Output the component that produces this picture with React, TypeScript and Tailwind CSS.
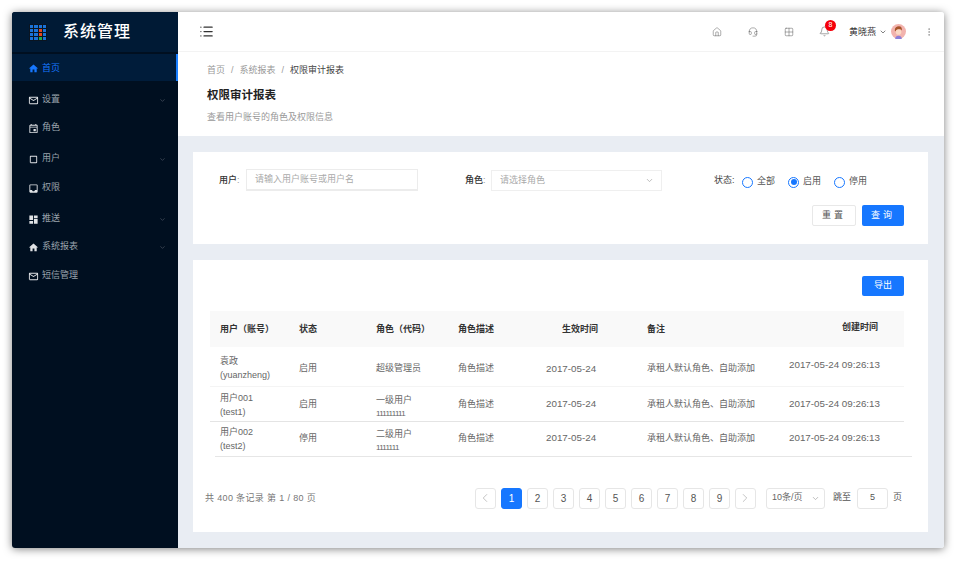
import { Bell, ChevronDown, ChevronLeft, ChevronRight, EllipsisVertical, Grid2x2, Headset, Home, List } from "lucide-react";
import { MdCropSquare, MdDashboard, MdHome, MdInbox, MdMailOutline, MdOutlineEvent } from "react-icons/md";

const menu = [
  { label: "设置", icon: MdMailOutline, arrow: true, top: "mt-[4px]" },
  { label: "角色", icon: MdOutlineEvent, arrow: false, top: "" },
  { label: "用户", icon: MdCropSquare, arrow: true, top: "mt-[3px]" },
  { label: "权限", icon: MdInbox, arrow: false, top: "mt-px" },
  { label: "推送", icon: MdDashboard, arrow: true, top: "mt-[3px]" },
  { label: "系统报表", icon: MdHome, arrow: true, top: "" },
  { label: "短信管理", icon: MdMailOutline, arrow: false, top: "mt-px" },
];

const logoColors = [
  "#1a73d8", "#1a73d8", "#1a73d8", "#1a73d8",
  "#1a73d8", "#1a73d8", "#e2451f", "#1a73d8",
  "#1a73d8", "#1a73d8", "#e2451f", "#1a73d8",
  "#1a73d8", "#1a73d8", "#23a847", "#1a73d8",
];

const rows = [
  { user: "袁政", account: "(yuanzheng)", status: "启用", role: "超级管理员", code: "", created: "2017-05-24 09:26:13", border: "border-[#f4f4f4]", h: "h-[39px]", cell: "pt-[5px]", date: "pt-[6px]", roleTop: "pt-[5px]", who: "pt-[4px]", time: "pb-[2px]" },
  { user: "用户001", account: "(test1)", status: "启用", role: "一级用户", code: "111111111", created: "2017-05-24 09:26:13", border: "border-[#e4e4e4]", h: "h-[35px]", cell: "pt-[3px]", date: "pt-px", roleTop: "pt-[6px]", who: "pt-[3px]", time: "pt-px" },
  { user: "用户002", account: "(test2)", status: "停用", role: "二级用户", code: "1111111", created: "2017-05-24 09:26:13", border: "border-transparent", h: "h-[34px]", cell: "pt-px", date: "pt-px", roleTop: "pt-[4px]", who: "pt-[2px]", time: "" },
];

function Radio({ label, checked }: { label: string; checked?: boolean }) {
  return (
    <div className="mt-[4px] flex items-center gap-[4px]">
      <span className="flex h-[11px] w-[11px] items-center justify-center rounded-full border border-[#1677ff]">
        {checked && <span className="h-[6px] w-[6px] rounded-full bg-[#1677ff]" />}
      </span>
      <span className="text-[9px] text-[#555]">{label}</span>
    </div>
  );
}

function Avatar() {
  return (
    <svg viewBox="0 0 16 16" className="h-[15px] w-[15px]">
      <circle cx="8" cy="8" r="8" fill="#f2b3ae" />
      <path d="M4 7c0-3 2-4.500 4.500-4.500S12 4.500 11.500 7L10 5.500 6 6.500 5 8z" fill="#a8542a" />
      <circle cx="8" cy="8.500" r="3" fill="#fbd9c4" />
      <path d="M4.500 16c0-2.500 1.500-3.500 3.500-3.500s3.500 1 3.500 3.500z" fill="#8d7fd8" />
    </svg>
  );
}

function PageButton({ children, active, muted }: { children: React.ReactNode; active?: boolean; muted?: boolean }) {
  const tone = active ? "border-[#1677ff] bg-[#1677ff] text-white" : muted ? "border-[#e6e6e6] bg-white text-[#aaa]" : "border-[#e6e6e6] bg-white text-[#555]";
  return <div className={`flex h-[21px] w-[21px] items-center justify-center rounded-[3px] border text-[10px] ${tone}`}>{children}</div>;
}

export default function App() {
  return (
    <div className="h-[561px] w-[956px] overflow-hidden bg-white pl-[12px] pt-[12px] font-['Liberation_Sans','Noto_Sans_CJK_SC',sans-serif]">
      <div className="flex h-[536px] w-[932px] overflow-hidden rounded-[3px] shadow-[0_1px_8px_rgba(0,0,0,0.5)]">
        <aside className="flex w-[166px] shrink-0 flex-col bg-[#000f20]">
          <div className="flex h-[40px] items-center bg-[#001a35] pl-[17px]">
            <div className="grid h-[17px] w-[18px] grid-cols-4 gap-px bg-[#0a1420] p-px">
              {logoColors.map((color, i) => (
                <span key={i} style={{ backgroundColor: color }} />
              ))}
            </div>
            <span className="ml-[16px] text-[16px] font-medium tracking-[1px] text-white">系统管理</span>
          </div>
          <div className="mt-[2px] flex h-[27px] items-center border-r-2 border-[#1a7fff] bg-[#001c3a] pl-[16px] pt-[2px] text-[#1677ff]">
            <MdHome size={11} />
            <span className="ml-[3px] text-[9px]">首页</span>
          </div>
          {menu.map((item) => (
            <div key={item.label} className={`flex h-[28px] items-center pl-[16px] pr-[12px] pt-[2px] text-[#9aa3ac] ${item.top}`}>
              <item.icon size={11} className="text-[#e0e3e6]" />
              <span className="ml-[3px] flex-1 text-[9px]">{item.label}</span>
              {item.arrow && <ChevronDown size={7} className="text-[#59636e]" />}
            </div>
          ))}
        </aside>

        <main className="flex min-w-0 flex-1 flex-col bg-[#e9edf3]">
          <header className="flex h-[40px] shrink-0 items-center border-b border-[#f3f3f3] bg-white pl-[21px] text-[#666]">
            <List size={15} className="text-[#333]" />
            <Home size={10} strokeWidth={1.3} className="ml-[498px]" />
            <Headset size={10} strokeWidth={1.3} className="ml-[26px]" />
            <Grid2x2 size={10} strokeWidth={1.3} className="ml-[26px]" />
            <div className="relative ml-[25px]">
              <Bell size={11} strokeWidth={1.3} />
              <span className="absolute -right-[6px] -top-[6px] flex h-[11px] w-[11px] items-center justify-center rounded-full bg-[#f5000a] text-[7px] text-white">8</span>
            </div>
            <span className="ml-[19px] pt-[2px] text-[9px] text-[#333]">黄晓燕</span>
            <ChevronDown size={8} className="ml-[3px] text-[#444]" />
            <span className="ml-[4px]"><Avatar /></span>
            <EllipsisVertical size={10} strokeWidth={1.5} className="ml-[18px] text-[#888]" />
          </header>

          <section className="h-[84px] shrink-0 bg-white pl-[29px] pt-[13px]">
            <div className="flex h-[12px] items-center gap-[6px] text-[9px] text-[#999]">
              <span>首页</span>
              <span>/</span>
              <span>系统报表</span>
              <span>/</span>
              <span className="text-[#444]">权限审计报表</span>
            </div>
            <h1 className="mt-[10px] text-[11.500px] font-semibold leading-[16px] text-[#222]">权限审计报表</h1>
            <p className="mt-[8px] text-[9px] leading-[12px] text-[#999]">查看用户账号的角色及权限信息</p>
          </section>

          <section className="ml-[15px] mt-[16px] h-[92px] w-[735px] shrink-0 bg-white">
            <div className="flex pt-[17px]">
              <div className="ml-[26px] flex items-center">
                <span className="w-[27px] pt-[2px] text-[9px] font-medium text-[#333]">用户<span className="font-normal text-[#999]">:</span></span>
                <div className="flex h-[22px] w-[172px] items-center border border-b-2 border-[#ececec] pl-[8px] pt-px text-[9px] text-[#aaa]">请输入用户账号或用户名</div>
              </div>
              <div className="ml-[47px] flex items-center">
                <span className="w-[26px] pt-[2px] text-[9px] font-medium text-[#333]">角色<span className="font-normal text-[#999]">:</span></span>
                <div className="flex h-[21px] w-[171px] items-center justify-between border border-[#efefef] pl-[8px] pr-[7px] pt-px text-[9px] text-[#aaa]">
                  请选择角色
                  <ChevronDown size={9} className="text-[#aaa]" />
                </div>
              </div>
              <div className="ml-[52px] flex items-center gap-[13px]">
                <span className="-mr-[12px] mt-px w-[27px] text-[9px] text-[#444]">状态:</span>
                <Radio label="全部" />
                <Radio label="启用" checked />
                <Radio label="停用" />
              </div>
            </div>
            <div className="mr-[24px] mt-[14px] flex justify-end gap-[6px]">
              <button className="h-[21px] w-[44px] rounded-[2px] border border-[#e8e8e8] text-[9px] tracking-[3px] text-[#555]">重置</button>
              <button className="h-[21px] w-[42px] rounded-[2px] bg-[#1677ff] text-[9px] tracking-[3px] text-white">查询</button>
            </div>
          </section>

          <section className="ml-[15px] mt-[16px] h-[272px] w-[735px] shrink-0 bg-white">
            <div className="mr-[24px] flex justify-end pt-[16px]">
              <button className="h-[20px] w-[42px] rounded-[2px] bg-[#1677ff] text-[9px] text-white">导出</button>
            </div>
            <table className="ml-[17px] mt-[15px] w-[694px] table-fixed border-collapse text-[9px] text-[#666]">
              <colgroup>
                <col className="w-[89px]" />
                <col className="w-[77px]" />
                <col className="w-[82px]" />
                <col className="w-[88px]" />
                <col className="w-[101px]" />
                <col className="w-[142px]" />
                <col className="w-[115px]" />
              </colgroup>
              <thead>
                <tr className="h-[36px] bg-[#f9f9f9] text-left text-[#333]">
                  <th className="pl-[10px] pt-[2px] font-semibold">用户（账号）</th>
                  <th className="pt-[2px] font-semibold">状态</th>
                  <th className="pt-[2px] font-semibold">角色（代码）</th>
                  <th className="pt-[2px] font-semibold">角色描述</th>
                  <th className="pr-[49px] pt-[2px] text-right font-semibold">生效时间</th>
                  <th className="pt-[2px] font-semibold">备注</th>
                  <th className="pb-[2px] pr-[26px] text-right font-semibold">创建时间</th>
                </tr>
              </thead>
              <tbody>
                {rows.map((row) => (
                  <tr key={row.user} className={`border-b ${row.border} ${row.h}`}>
                    <td className={`pl-[10px] leading-[14.500px] ${row.who}`}>
                      {row.user}
                      <br />
                      {row.account}
                    </td>
                    <td className={row.cell}>{row.status}</td>
                    <td className={`leading-[15px] ${row.roleTop}`}>
                      {row.role}
                      {row.code && <div className="text-[8px] leading-[12px] tracking-[-0.7px]">{row.code}</div>}
                    </td>
                    <td className={row.cell}>角色描述</td>
                    <td className={`text-[9.800px] ${row.date}`}>2017-05-24</td>
                    <td className={row.cell}>承租人默认角色、自助添加</td>
                    <td className={`text-[9.800px] ${row.time}`}>{row.created}</td>
                  </tr>
                ))}
              </tbody>
            </table>
            <div className="ml-[22px] h-px w-[697px] bg-[#e6e6e6]" />
            <div className="ml-[12px] mr-[26px] mt-[31px] flex items-center justify-between text-[9px] text-[#777]">
              <span className="pt-[2px] tracking-[0.35px]">共 400 条记录 第 1 / 80 页</span>
              <div className="flex items-center">
                <div className="flex gap-[5px]">
                  <PageButton muted><ChevronLeft size={14} strokeWidth={1.2} /></PageButton>
                  <PageButton active>1</PageButton>
                  {[2, 3, 4, 5, 6, 7, 8, 9].map((n) => (
                    <PageButton key={n}>{n}</PageButton>
                  ))}
                  <PageButton muted><ChevronRight size={14} strokeWidth={1.2} /></PageButton>
                </div>
                <div className="ml-[10px] flex h-[21px] w-[59px] items-center justify-between rounded-[3px] border border-[#e6e6e6] pl-[5px] pr-[4px] text-[#666]">
                  10条/页
                  <ChevronDown size={9} className="text-[#aaa]" />
                </div>
                <span className="ml-[8px] text-[#555]">跳至</span>
                <div className="ml-[6px] flex h-[21px] w-[31px] items-center justify-center rounded-[3px] border border-[#e6e6e6] text-[#555]">5</div>
                <span className="ml-[5px] text-[#555]">页</span>
              </div>
            </div>
          </section>
        </main>
      </div>
    </div>
  );
}
